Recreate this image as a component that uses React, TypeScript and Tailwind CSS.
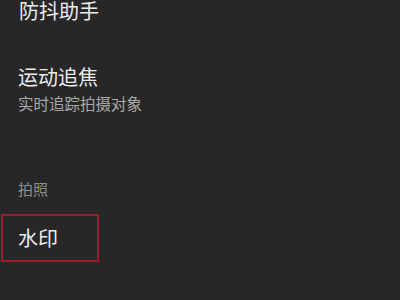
const font = { fontFamily: '"Noto Sans CJK SC", "Noto Sans", sans-serif' };

function Title({ children }: { children: React.ReactNode }) {
  return <div className="text-[20px] leading-[20px] text-[#ececec]">{children}</div>;
}

export default function App() {
  return (
    <div className="w-[400px] h-[300px] overflow-hidden bg-[#272727]" style={font}>
      <div className="flex flex-col">
        <div className="pl-[19px] pt-[1px]">
          <Title>防抖助手</Title>
        </div>

        <div className="pl-[18px] mt-[46px]">
          <Title>运动追焦</Title>
          <div className="mt-[9px] text-[15.5px] leading-[15px] text-[#a8a8a8]">
            实时追踪拍摄对象
          </div>
        </div>

        <div className="pl-[18px] mt-[71px] text-[15px] leading-[14px] text-[#8e8e8e]">
          拍照
        </div>

        <div className="ml-[1px] mt-[18px] w-[98px] h-[48px] border-2 border-[#9c1c2c] pl-[15px] flex items-center">
          <Title>水印</Title>
        </div>

        <div className="pl-[18px] mt-[39px]">
          <Title>拍摄参数</Title>
        </div>
      </div>
    </div>
  );
}
